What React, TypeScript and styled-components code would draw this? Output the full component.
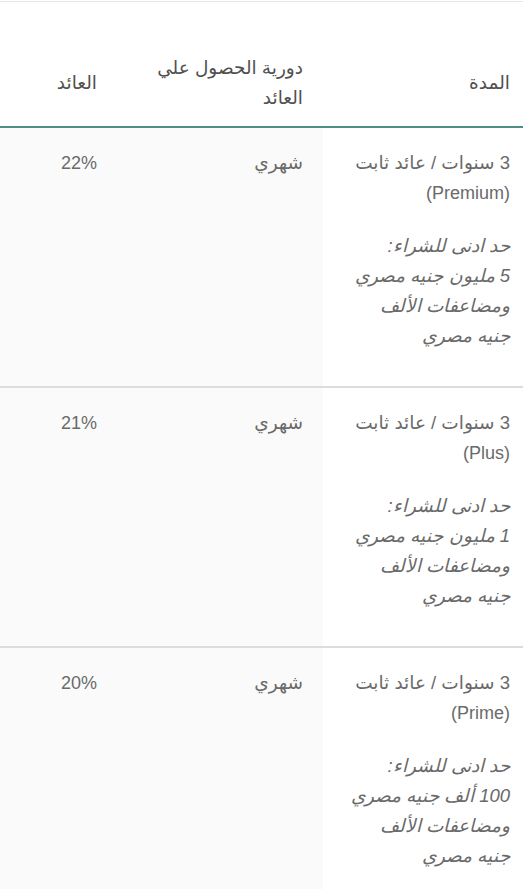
import React from 'react'
import styled, { createGlobalStyle } from 'styled-components'

const GlobalStyle = createGlobalStyle`
  html, body {
    margin: 0;
    padding: 0;
    background: #ffffff;
  }
  body {
    font-family: "Liberation Sans", "DejaVu Sans", sans-serif;
    -webkit-font-smoothing: antialiased;
  }
`

const Table = styled.div`
  direction: rtl;
  width: 523px;
  margin-top: 1px;
  border-top: 1px solid #e6e6e6;
`

const Row = styled.div<{ head?: boolean }>`
  display: grid;
  grid-template-columns: 200px 213px 110px;
  border-bottom: 2px solid ${({ head }) => (head ? '#4d8f88' : '#dcdcdc')};
  height: ${({ head }) => (head ? '124px' : '258px')};
`

const HeadCell = styled.div<{ wide?: boolean }>`
  display: flex;
  align-items: center;
  padding: 38px ${({ wide }) => (wide ? '20px' : '13px')} 0 0;
  font-size: 18.5px;
  line-height: 30px;
  color: #505050;
  background: #ffffff;
`

const Cell = styled.div<{ first?: boolean; wide?: boolean }>`
  padding: 20px ${({ wide }) => (wide ? '20px' : '13px')} 0 0;
  font-size: 18.5px;
  line-height: 30px;
  color: #6a6a6a;
  background: ${({ first }) => (first ? '#ffffff' : '#fafafa')};
`

const Title = styled.p`
  margin: 0 0 23px;
`

const Note = styled.p`
  margin: 0;
  font-style: italic;
`

const Latin = styled.span`
  font-family: "Liberation Sans", sans-serif;
  font-size: 18px;
  color: #6a6a6a;
`

type Plan = {
  tier: string
  min: string
  rate: string
}

const plans: Plan[] = [
  { tier: 'Premium', min: '5 مليون جنيه مصري', rate: '22%' },
  { tier: 'Plus', min: '1 مليون جنيه مصري', rate: '21%' },
  { tier: 'Prime', min: '100 ألف جنيه مصري', rate: '20%' },
]

const App: React.FC = () => {
  return (
    <>
      <GlobalStyle />
      <Table>
        <Row head>
          <HeadCell>المدة</HeadCell>
          <HeadCell wide>
            دورية الحصول علي
            <br />
            العائد
          </HeadCell>
          <HeadCell>العائد</HeadCell>
        </Row>
        {plans.map((p) => (
          <Row key={p.tier}>
            <Cell first>
              <Title>
                3 سنوات / عائد ثابت
                <br />
                <Latin>({p.tier})</Latin>
              </Title>
              <Note>
                حد ادنى للشراء:
                <br />
                {p.min}
                <br />
                ومضاعفات الألف
                <br />
                جنيه مصري
              </Note>
            </Cell>
            <Cell wide>شهري</Cell>
            <Cell>
              <Latin>{p.rate}</Latin>
            </Cell>
          </Row>
        ))}
      </Table>
    </>
  )
}

export default App
